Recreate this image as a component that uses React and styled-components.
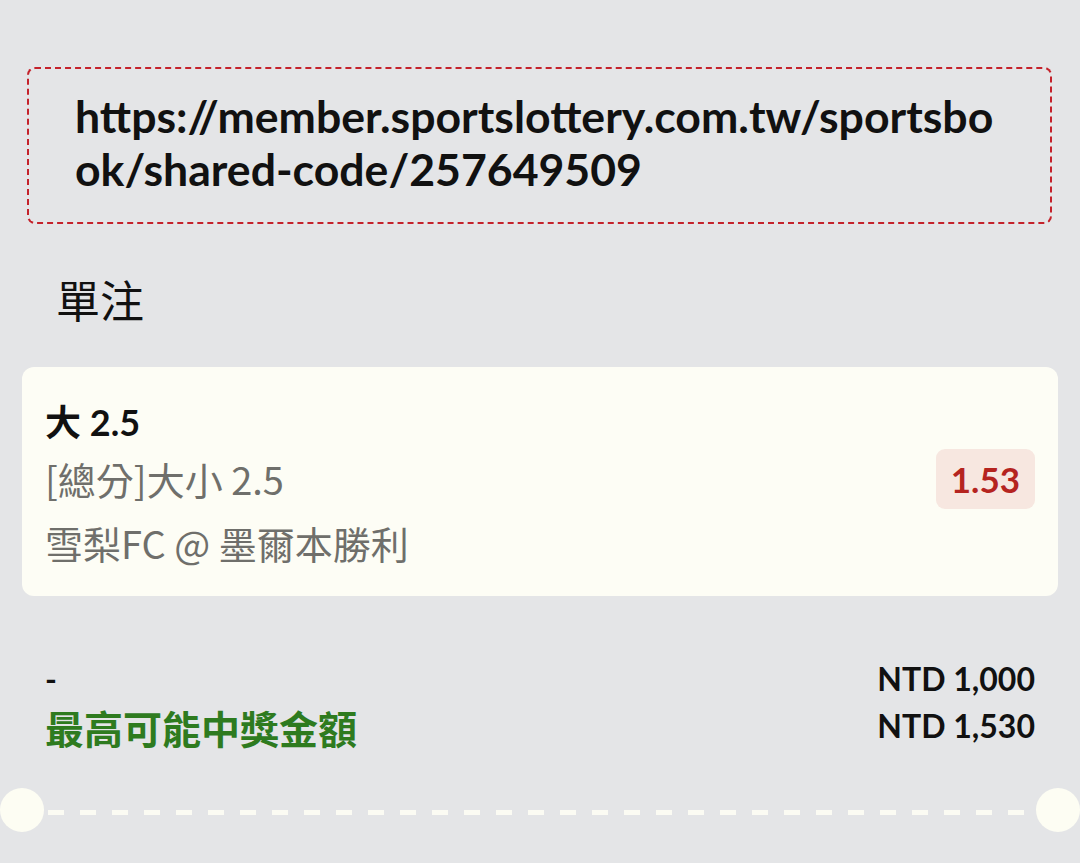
import React from 'react'
import styled, { createGlobalStyle } from 'styled-components'

const GlobalStyle = createGlobalStyle`
  html, body {
    margin: 0;
    padding: 0;
    background: #e4e5e7;
  }
  body {
    font-family: Lato, "Noto Sans CJK TC", sans-serif;
    color: #111;
  }
`

const Page = styled.div`
  width: 1080px;
  min-height: 863px;
  padding-top: 67px;
  box-sizing: border-box;
  background: #e4e5e7;
`

const LinkBox = styled.div`
  margin: 0 28px 0 27px;
  padding: 20px 40px 27px 46px;
  border: 2px dashed #c4222b;
  border-radius: 8px;
  font-size: 44.6px;
  font-weight: 700;
  line-height: 53px;
  word-break: break-all;
`

const SectionTitle = styled.div`
  margin: 45px 0 0 56px;
  font-family: "Noto Sans CJK TC", sans-serif;
  font-size: 44px;
  line-height: 60px;
  font-weight: 400;
`

const BetCard = styled.div`
  margin: 38px 22px 0 22px;
  padding: 33px 23px 21px 23px;
  background: #fdfdf5;
  border-radius: 12px;
  display: flex;
  align-items: center;
  justify-content: space-between;
`

const BetInfo = styled.div`
  display: flex;
  flex-direction: column;
`

const Selection = styled.div`
  font-size: 36px;
  font-weight: 700;
  line-height: 44px;
  margin-bottom: 3px;
  color: #111;
`

const InfoLine = styled.div`
  font-family: "Noto Sans CJK TC", sans-serif;
  font-size: 38px;
  line-height: 64px;
  color: #6f6f6b;
`

const Odds = styled.div`
  padding: 0 15px;
  height: 60px;
  display: flex;
  align-items: center;
  border-radius: 9px;
  background: #f7e7e0;
  color: #b5241f;
  font-size: 35px;
  font-weight: 700;
  margin-top: -17px;
`

const Summary = styled.div`
  margin: 59px 45px 0 45px;
  display: flex;
  justify-content: space-between;
  align-items: flex-start;
`

const Column = styled.div`
  display: flex;
  flex-direction: column;
  align-items: ${({ $end }) => ($end ? 'flex-end' : 'flex-start')};
`

const Amount = styled.div`
  font-size: 32px;
  font-weight: 700;
  line-height: 47px;
  color: #111;
`

const WinLabel = styled.div`
  font-family: "Noto Sans CJK TC", sans-serif;
  font-size: 39px;
  font-weight: 700;
  line-height: 50px;
  color: #2e7b1f;
`

const Perforation = styled.div`
  margin-top: 36px;
  display: flex;
  align-items: center;
`

const Hole = styled.div`
  flex: none;
  width: 44px;
  height: 44px;
  border-radius: 50%;
  background: #fdfdf3;
`

const DashLine = styled.div`
  flex: 1;
  height: 5px;
  margin: 4px 4px 0 4px;
  background: repeating-linear-gradient(
    to right,
    #fbfbf3 0 16px,
    transparent 16px 32px
  );
`

export default function App() {
  return (
    <>
      <GlobalStyle />
      <Page>
        <LinkBox>https://member.sportslottery.com.tw/sportsbook/shared-code/257649509</LinkBox>
        <SectionTitle>單注</SectionTitle>
        <BetCard>
          <BetInfo>
            <Selection>大 2.5</Selection>
            <InfoLine>[總分]大小 2.5</InfoLine>
            <InfoLine>雪梨FC @ 墨爾本勝利</InfoLine>
          </BetInfo>
          <Odds>1.53</Odds>
        </BetCard>
        <Summary>
          <Column>
            <Amount>-</Amount>
            <WinLabel>最高可能中獎金額</WinLabel>
          </Column>
          <Column $end>
            <Amount>NTD 1,000</Amount>
            <Amount>NTD 1,530</Amount>
          </Column>
        </Summary>
        <Perforation>
          <Hole />
          <DashLine />
          <Hole />
        </Perforation>
      </Page>
    </>
  )
}
